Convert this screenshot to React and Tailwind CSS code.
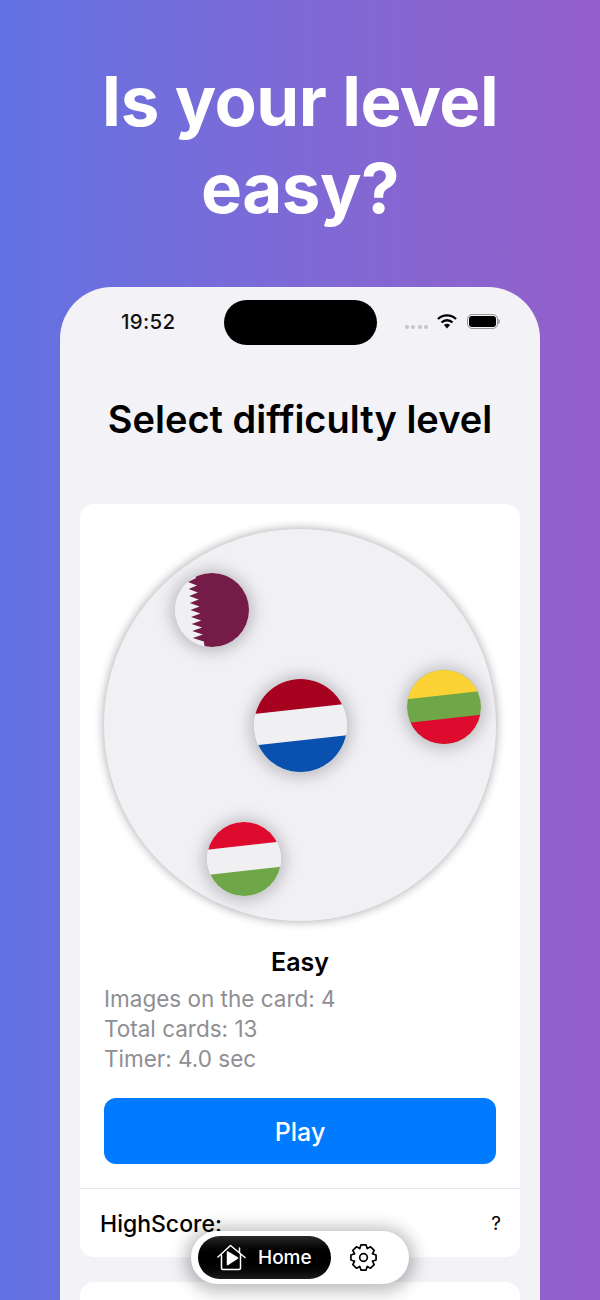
import React from "react";

const FONT = { fontFamily: "Inter, 'Liberation Sans', sans-serif" };

// serrated edge of the Qatar flag, nine teeth leaning slightly
const qatarEdge = () => {
  let d = "M17 -2 L74 -2 L74 76 L30 76";
  for (let i = 8; i >= 0; i--) {
    d += ` L${(22 + i * 0.85).toFixed(1)} ${(12.5 + i * 7).toFixed(1)}`;
    d += ` L${(13 + i * 0.6).toFixed(1)} ${(9 + i * 7).toFixed(1)}`;
  }
  return d + " L21 5 Z";
};

// eight tooth cog outline
const gearPath = () => {
  const pts = [];
  for (let i = 0; i < 8; i++) {
    const a = (i * Math.PI) / 4 - Math.PI / 2;
    [[-0.4, 8.6], [-0.2, 11.4], [0.2, 11.4], [0.4, 8.6]].forEach(([da, r]) => {
      pts.push(`${(12 + r * Math.cos(a + da)).toFixed(2)} ${(12 + r * Math.sin(a + da)).toFixed(2)}`);
    });
  }
  return "M" + pts.join(" L") + " Z";
};

const FlagQatar = () => (
  <svg viewBox="0 0 74 74" className="w-full h-full">
    <defs>
      <clipPath id="qa"><circle cx="37" cy="37" r="37" /></clipPath>
    </defs>
    <g clipPath="url(#qa)">
      <rect width="74" height="74" fill="#f0f0f2" />
      <path d={qatarEdge()} fill="#741b47" />
    </g>
  </svg>
);

const FlagStripes = ({ id, top, mid, bottom, upper, lower }) => (
  <svg viewBox="0 0 100 100" className="w-full h-full">
    <defs>
      <clipPath id={id}><circle cx="50" cy="50" r="50" /></clipPath>
    </defs>
    <g clipPath={`url(#${id})`}>
      <rect width="100" height="100" fill={mid} />
      <polygon points={`0,${upper + 5.5} 100,${upper - 5.5} 100,-5 0,-5`} fill={top} />
      <polygon points={`0,${lower + 5.5} 100,${lower - 5.5} 100,105 0,105`} fill={bottom} />
    </g>
  </svg>
);

const FlagBubble = ({ className, children }) => (
  <div className={`absolute rounded-full shadow-[0_1px_14px_5px_rgba(60,60,70,0.26)] ${className}`}>{children}</div>
);

const StatusBar = () => (
  <div className="relative h-[58px] pt-[13px] flex items-start justify-between pl-[61px] pr-[40px]">
    <span className="text-[20.5px] font-medium leading-[44px] text-[#111] tracking-[0.3px]">19:52</span>
    <div className="absolute left-[164px] top-[13px] w-[153px] h-[45px] rounded-full bg-black"></div>
    <div className="flex items-center h-[44px] -mt-[1px]">
      <div className="flex gap-[2.5px] mr-[9px] mt-[12px]">
        <span className="w-[4px] h-[4px] rounded-full bg-[#c6c6c8]"></span>
        <span className="w-[4px] h-[4px] rounded-full bg-[#c6c6c8]"></span>
        <span className="w-[4px] h-[4px] rounded-full bg-[#c6c6c8]"></span>
        <span className="w-[4px] h-[4px] rounded-full bg-[#c6c6c8]"></span>
      </div>
      <svg className="mr-[10px]" width="20" height="15" viewBox="0 0 20 15">
        <path d="M1 5 A13 13 0 0 1 19 5" fill="none" stroke="#000" strokeWidth="2.4" />
        <path d="M4.5 8.5 A8 8 0 0 1 15.5 8.5" fill="none" stroke="#000" strokeWidth="2.4" />
        <path d="M7 11 A4 4 0 0 1 13 11 L10 14.5 Z" fill="#000" />
      </svg>
      <div className="flex items-center">
        <div className="w-[31px] h-[15px] rounded-[5px] border border-[#999] p-[1px]">
          <div className="w-full h-full rounded-[3px] bg-black"></div>
        </div>
        <div className="w-[2px] h-[5px] rounded-r bg-[#aaa]"></div>
      </div>
    </div>
  </div>
);

const BottomNav = () => (
  <div className="absolute left-[191px] top-[1231px] w-[218px] h-[53px] rounded-full bg-white shadow-[0_2px_16px_6px_rgba(0,0,0,0.25)] flex items-center pl-[7px]">
    <div className="w-[133px] h-[43px] rounded-full bg-gradient-to-b from-[#2a2a2a] via-black to-[#1c1c1c] flex items-center pl-[19px] gap-[12px] text-white">
      <svg width="29" height="27" viewBox="0 0 29 27" fill="none" stroke="#fff" strokeWidth="1.5" strokeLinecap="round" strokeLinejoin="round">
        <path d="M1 13 L13.5 1.5 L28 13.5" />
        <path d="M22.5 4 L22.5 8.5" />
        <path d="M4.5 11 V24 a1.5 1.5 0 0 0 1.5 1.5 H22 a1.5 1.5 0 0 0 1.5 -1.5 V10.5" />
        <path d="M10.5 8 L20.5 14 L10.5 20.5 Z" fill="#fff" />
      </svg>
      <span className="text-[19px] font-medium leading-none">Home</span>
    </div>
    <svg className="ml-[19px]" width="27" height="27" viewBox="0 0 24 24" fill="none" stroke="#000" strokeWidth="1.5" strokeLinecap="round" strokeLinejoin="round">
      <path d={gearPath()} />
      <circle cx="12" cy="12" r="3.4" />
    </svg>
  </div>
);

export default function App() {
  return (
    <div
      className="relative w-[600px] h-[1300px] overflow-hidden bg-gradient-to-r from-[#6272e2] to-[#945fca]"
      style={FONT}
    >
      <h1 className="pt-[58px] h-[287px] text-center text-white text-[69px] font-bold leading-[87px] tracking-[-0.5px]">
        Is your level<br />easy?
      </h1>

      <div className="mx-[60px] h-[1100px] rounded-t-[52px] bg-[#f2f2f7] overflow-hidden">
        <StatusBar />
        <h2 className="pt-[51px] h-[159px] text-center text-[38px] font-semibold leading-[46px] text-black">
          Select difficulty level
        </h2>

        <div className="mx-[20px] h-[753px] rounded-[14px] bg-white">
          <div className="relative mx-[24px] pt-[25px]">
            <div className="relative w-[392px] h-[392px] rounded-full bg-[#f1f1f5] shadow-[0_0_10px_1px_rgba(0,0,0,0.3)]">
              <FlagBubble className="left-[71px] top-[44px] w-[74px] h-[74px]">
                <FlagQatar />
              </FlagBubble>
              <FlagBubble className="left-[150px] top-[150px] w-[93px] h-[93px]">
                <FlagStripes id="nl" top="#a6011f" mid="#f0f0f2" bottom="#0a50ae" upper={32} lower={66} />
              </FlagBubble>
              <FlagBubble className="left-[303px] top-[141px] w-[74px] h-[74px]">
                <FlagStripes id="lt" top="#fdd235" mid="#6fa648" bottom="#df0b2e" upper={34} lower={66} />
              </FlagBubble>
              <FlagBubble className="left-[103px] top-[293px] w-[74px] h-[74px]">
                <FlagStripes id="hu" top="#df0b2e" mid="#f0f0f2" bottom="#6fa648" upper={32} lower={66} />
              </FlagBubble>
            </div>
          </div>

          <div className="mx-[24px] mt-[24px]">
            <p className="text-center text-[25px] font-semibold leading-[34px] text-black">Easy</p>
            <div className="mt-[5px] text-[22.5px] leading-[30px] text-[#8e8e93]">
              <p>Images on the card: 4</p>
              <p>Total cards: 13</p>
              <p>Timer: 4.0 sec</p>
            </div>
            <button className="mt-[24px] w-full h-[66px] pt-[3px] rounded-[12px] bg-[#007aff] text-white text-[25px] font-medium">
              Play
            </button>
          </div>

          <div className="mt-[24px] border-t border-[#e5e5ea] pl-[20px] pr-[19px] pt-[21px] flex items-center justify-between">
            <span className="text-[23px] font-medium leading-[28px] text-black">HighScore:</span>
            <span className="text-[19px] leading-[28px] text-black">?</span>
          </div>
        </div>

        <div className="mx-[20px] mt-[25px] h-[100px] rounded-[14px] bg-white"></div>
      </div>

      <BottomNav />
    </div>
  );
}
